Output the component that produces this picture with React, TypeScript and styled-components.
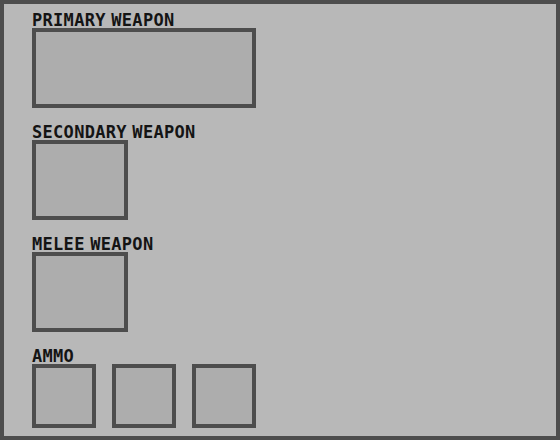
import styled, { createGlobalStyle } from "styled-components";

const GlobalStyle = createGlobalStyle`
    html, body {
        margin: 0;
        padding: 0;
        background: #b8b8b8;
    }
`;

const Panel = styled.div`
    box-sizing: border-box;
    width: 560px;
    height: 440px;
    border: 4px solid #4d4d4d;
    background: #b8b8b8;
    padding: 8px 28px;
    display: flex;
    flex-direction: column;
    gap: 16px;
    font-family: "DejaVu Sans Mono", "Liberation Mono", monospace;
`;

const Section = styled.div`
    display: flex;
    flex-direction: column;
`;

const Label = styled.div`
    height: 16px;
    font-size: 17px;
    line-height: 17px;
    font-weight: bold;
    color: #141414;
    letter-spacing: 0.3px;
    word-spacing: -5px;
    text-transform: uppercase;
    white-space: nowrap;
`;

const Slot = styled.div<{ $w: number; $h: number }>`
    box-sizing: border-box;
    width: ${(props) => props.$w}px;
    height: ${(props) => props.$h}px;
    border: 4px solid #4d4d4d;
    background: #adadad;
`;

const SlotRow = styled.div`
    display: flex;
    gap: 16px;
`;

const slots = [
    { label: "Primary Weapon", w: 224, h: 80 },
    { label: "Secondary Weapon", w: 96, h: 80 },
    { label: "Melee Weapon", w: 96, h: 80 },
];

function App() {
    return (
        <>
            <GlobalStyle />
            <Panel>
                {slots.map((slot) => (
                    <Section key={slot.label}>
                        <Label>{slot.label}</Label>
                        <Slot $w={slot.w} $h={slot.h} />
                    </Section>
                ))}
                <Section>
                    <Label>Ammo</Label>
                    <SlotRow>
                        {[0, 1, 2].map((i) => (
                            <Slot key={i} $w={64} $h={64} />
                        ))}
                    </SlotRow>
                </Section>
            </Panel>
        </>
    );
}

export default App;
